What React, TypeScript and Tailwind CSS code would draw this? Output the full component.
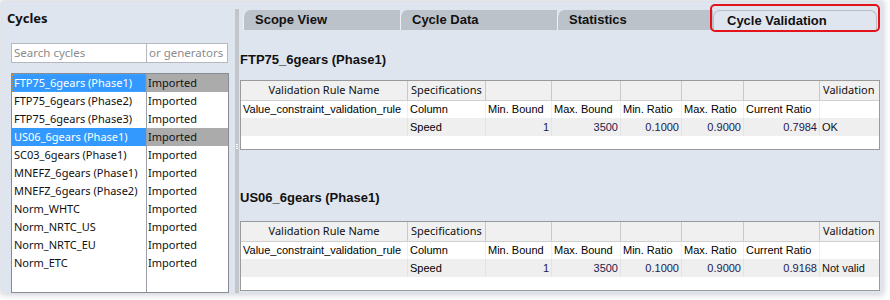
import React from "react";

const cycles: { name: string; sel?: boolean; focus?: boolean }[] = [
  { name: "FTP75_6gears (Phase1)", sel: true, focus: true },
  { name: "FTP75_6gears (Phase2)" },
  { name: "FTP75_6gears (Phase3)" },
  { name: "US06_6gears (Phase1)", sel: true },
  { name: "SC03_6gears (Phase1)" },
  { name: "MNEFZ_6gears (Phase1)" },
  { name: "MNEFZ_6gears (Phase2)" },
  { name: "Norm_WHTC" },
  { name: "Norm_NRTC_US" },
  { name: "Norm_NRTC_EU" },
  { name: "Norm_ETC" },
];

const uiFont = { fontFamily: '"Noto Sans", "Open Sans", sans-serif' };
const arial = { fontFamily: '"Liberation Sans", Arial, sans-serif' };

function ValidationTable({ current, result }: { current: string; result: string }) {
  const cols = "grid grid-cols-[167px_78px_66px_69px_61px_62px_76px_1fr]";
  const hc = "border-r border-[#c9c9c9] flex items-center";
  const dc = "border-r border-[#f0f0f0] flex items-center px-[2px] truncate";
  const dc2 = "border-r border-[#e4e4e4] flex items-center px-[2px] truncate";
  const nc = "border-r border-[#e4e4e4] flex items-center justify-end px-[2px] text-[#241a4e]";
  return (
    <div className="border border-[#9a9a9a] bg-white w-[640px]">
      <div className={`${cols} h-[20px] bg-[#f0f0f0] border-b border-[#d0d0d0] text-[11px] text-[#111]`} style={uiFont}>
        <div className={`${hc} justify-center`}>Validation Rule Name</div>
        <div className={`${hc} pl-[3px]`}>Specifications</div>
        <div className={hc}></div>
        <div className={hc}></div>
        <div className={hc}></div>
        <div className={hc}></div>
        <div className={hc}></div>
        <div className="flex items-center pl-[3px]">Validation</div>
      </div>
      <div className={`${cols} h-[17px] bg-white text-[11px] text-black`} style={arial}>
        <div className={dc}>Value_constraint_validation_rule</div>
        <div className={dc}>Column</div>
        <div className={dc}>Min. Bound</div>
        <div className={dc}>Max. Bound</div>
        <div className={dc}>Min. Ratio</div>
        <div className={dc}>Max. Ratio</div>
        <div className={dc}>Current Ratio</div>
        <div className="flex items-center"></div>
      </div>
      <div className={`${cols} h-[18px] bg-[#efefef] text-[11px] text-black`} style={arial}>
        <div className="border-r border-[#e4e4e4]"></div>
        <div className={dc2}>Speed</div>
        <div className={nc}>1</div>
        <div className={nc}>3500</div>
        <div className={nc}>0.1000</div>
        <div className={nc}>0.9000</div>
        <div className={nc}>{current}</div>
        <div className="flex items-center px-[2px] text-[#111]">{result}</div>
      </div>
      <div className="h-[13px] bg-white"></div>
    </div>
  );
}

function Tab({ label, w, active }: { label: string; w: string; active?: boolean }) {
  return (
    <div
      className={`${w} h-[20px] flex items-center pl-[11px] text-[13px] font-bold text-[#111] rounded-tl-[7px] ${
        active
          ? "bg-[#e0e6ef] border-l border-r border-t border-[#b9bec6] rounded-tr-[7px] pl-[13px]"
          : "bg-[#bcc2ca] border-l border-[#eef1f5]"
      }`}
      style={arial}
    >
      {label}
    </div>
  );
}

export default function App() {
  return (
    <div className="w-[890px] h-[300px] bg-white overflow-hidden">
      <div className="ml-[2px] mt-[2px] w-[880px] h-[291px] bg-[#dfe5ee] shadow-[0_0_6px_2px_rgba(120,130,150,0.35)] flex">
        {/* Left pane */}
        <div className="w-[227px] flex flex-col">
          <div className="pl-[5px] pt-[8px] h-[24px] text-[13px] font-bold text-[#111] leading-[16px]" style={uiFont}>
            Cycles
          </div>
          <div className="ml-[9px] mt-[17px] flex h-[20px] text-[11.5px]" style={uiFont}>
            <div className="w-[136px] bg-white border border-[#b5b8bf] flex items-center pl-[2px] text-[#8c8c8c]">
              Search cycles
            </div>
            <div className="w-[81px] bg-white border border-l-0 border-[#b5b8bf] flex items-center pl-[2px] text-[#8c8c8c]">
              or generators
            </div>
          </div>
          <div className="ml-[9px] mt-[10px] w-[218px] flex-1 bg-white border border-[#868b94] flex text-[11px] text-[#111]" style={uiFont}>
            <div className="w-[135px] border-r border-[#9a9ea6]">
              {cycles.map((c) => (
                <div
                  key={c.name}
                  className={`h-[18px] flex items-center pl-[2px] whitespace-nowrap ${
                    c.sel ? "bg-[#3399ff] text-white" : ""
                  } ${c.focus ? "outline outline-1 outline-dotted outline-[#d08a3a] -outline-offset-1" : ""}`}
                >
                  {c.name}
                </div>
              ))}
            </div>
            <div className="flex-1">
              {cycles.map((c) => (
                <div key={c.name} className={`h-[18px] flex items-center pl-[1px] ${c.sel ? "bg-[#ababab]" : ""}`}>
                  Imported
                </div>
              ))}
            </div>
          </div>
        </div>
        {/* Splitter */}
        <div className="w-[11px] flex">
          <div className="ml-[6px] mt-[7px] w-[4px] bg-[#c2c5ca] flex flex-col items-center justify-center">
            <div className="flex flex-col gap-[1px] -mt-[10px]">
              <div className="w-[2px] h-[1px] bg-white"></div>
              <div className="w-[2px] h-[1px] bg-white"></div>
              <div className="w-[2px] h-[1px] bg-white"></div>
            </div>
          </div>
        </div>
        {/* Right pane */}
        <div className="flex-1 relative flex flex-col">
          <div className="mt-[8px] ml-[3px] flex">
            <Tab label="Scope View" w="w-[157px]" />
            <Tab label="Cycle Data" w="w-[157px]" />
            <Tab label="Statistics" w="w-[156px]" />
            <Tab label="Cycle Validation" w="w-[164px]" active />
          </div>
          <div className="absolute left-[470px] top-[2px] w-[170px] h-[28px] border-2 border-[#e4121b] rounded-[5px]"></div>
          <div className="mt-[22px] h-[16px] leading-[16px] text-[13px] font-bold text-[#111]" style={arial}>
            FTP75_6gears (Phase1)
          </div>
          <div className="mt-[12px]">
            <ValidationTable current="0.7984" result="OK" />
          </div>
          <div className="mt-[40px] h-[16px] leading-[16px] text-[13px] font-bold text-[#111]" style={arial}>
            US06_6gears (Phase1)
          </div>
          <div className="mt-[15px]">
            <ValidationTable current="0.9168" result="Not valid" />
          </div>
        </div>
      </div>
    </div>
  );
}
